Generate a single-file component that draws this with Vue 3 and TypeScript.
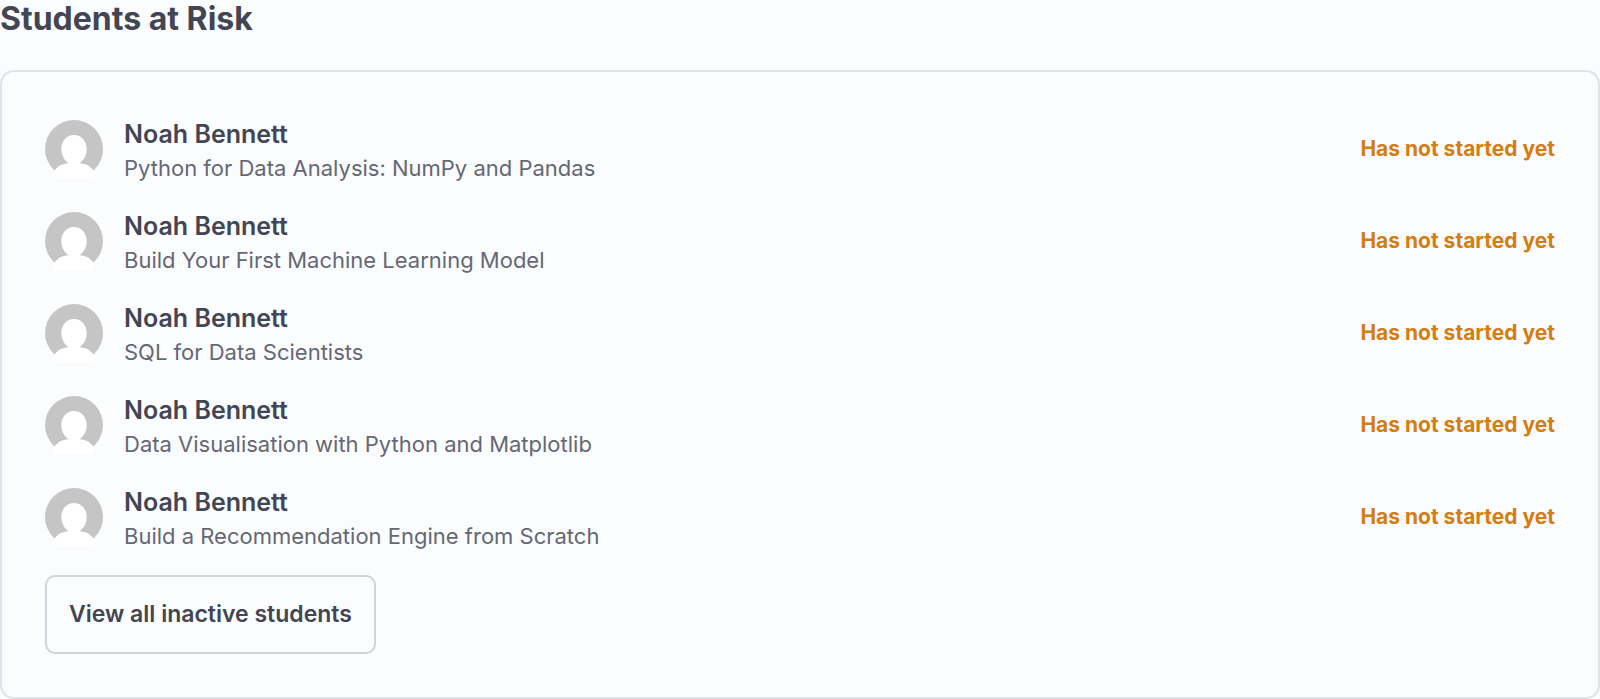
<script setup lang="ts">
interface InactiveStudent {
  id: number
  name: string
  course: string
  status: string
}

const students: InactiveStudent[] = [
  'Python for Data Analysis: NumPy and Pandas',
  'Build Your First Machine Learning Model',
  'SQL for Data Scientists',
  'Data Visualisation with Python and Matplotlib',
  'Build a Recommendation Engine from Scratch',
].map((course, id) => ({ id, name: 'Noah Bennett', course, status: 'Has not started yet' }))
</script>

<template>
  <section class="risk" aria-labelledby="risk-title">
    <h2 id="risk-title" class="title">Students at Risk</h2>
    <div class="card">
      <ul class="list">
        <li v-for="student in students" :key="student.id" class="row">
          <svg class="avatar" viewBox="0 0 58 58" aria-hidden="true">
            <circle cx="29" cy="29" r="29" fill="#c5c5c5" />
            <path
              d="M29 15c7.2 0 12.7 6 12.7 14 0 6-2.700 11.300-7.200 14.200 6.500.6 10.300 2.400 14.500 7.800V58H9v-7c4.200-5.400 8-7.200 14.500-7.800-4.500-2.900-7.200-8.200-7.200-14.200 0-8 5.500-14 12.700-14Z"
              fill="#fff"
            />
          </svg>
          <div class="details">
            <span class="name">{{ student.name }}</span>
            <span class="course">{{ student.course }}</span>
          </div>
          <span class="status">{{ student.status }}</span>
        </li>
      </ul>
      <button type="button" class="view-all">View all inactive students</button>
    </div>
  </section>
</template>

<style>
body {
  background: #fbfcfe;
}
</style>

<style scoped>
.risk {
  font-family: Inter, "Liberation Sans", sans-serif;
  color: #434652;
}

.title {
  margin: 0 0 32px;
  font-size: 32px;
  line-height: 38px;
  font-weight: 700;
}

.card {
  padding: 43px;
  border: 2px solid #e1e2e5;
  border-radius: 14px;
}

.list {
  display: flex;
  flex-direction: column;
  gap: 24px;
  margin: 0 0 24px;
  padding: 0;
  list-style: none;
}

.row {
  display: flex;
  align-items: center;
  gap: 21px;
}

.avatar {
  flex: none;
  width: 58px;
  height: 58px;
}

.details {
  display: flex;
  flex: 1;
  flex-direction: column;
  min-width: 0;
}

.name {
  font-size: 25px;
  line-height: 38px;
  font-weight: 600;
}

.course {
  font-size: 22px;
  line-height: 30px;
  color: #656874;
}

.status {
  flex: none;
  font-size: 21px;
  line-height: 30px;
  font-weight: 700;
  color: #d47d12;
}

.view-all {
  display: block;
  padding: 22px;
  border: 2px solid #d2d3d6;
  border-radius: 10px;
  background: transparent;
  color: inherit;
  font: 600 23px/31px Inter, "Liberation Sans", sans-serif;
  cursor: pointer;
}
</style>
